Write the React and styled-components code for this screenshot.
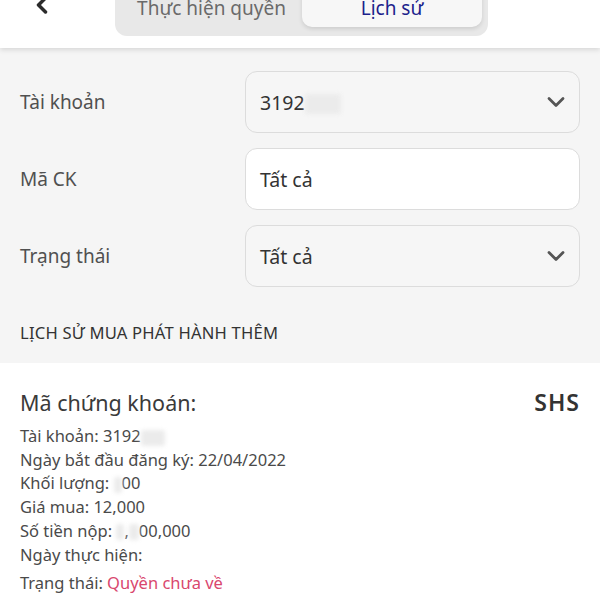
import styled, { createGlobalStyle } from "styled-components";
import { ChevronLeft, ChevronDown } from "lucide-react";

const GlobalStyle = createGlobalStyle`
  body {
    margin: 0;
    background: #ffffff;
    font-family: "Noto Sans", "Liberation Sans", sans-serif;
    color: #3a3a3a;
  }
`;

const Page = styled.div`
  width: 600px;
  height: 600px;
  overflow: hidden;
  display: flex;
  flex-direction: column;
  background: #f5f5f5;
`;

const Header = styled.header`
  height: 48px;
  flex-shrink: 0;
  display: flex;
  align-items: flex-end;
  background: #ffffff;
  box-shadow: 0 2px 5px rgba(0, 0, 0, 0.12);
  overflow: hidden;
  position: relative;
  z-index: 1;
`;

const BackButton = styled.button`
  width: 115px;
  height: 48px;
  align-self: flex-start;
  margin-top: -19px;
  padding: 0 0 0 28px;
  border: none;
  background: none;
  display: flex;
  align-items: center;
  color: #2b2b2b;
`;

const Segment = styled.div`
  width: 373px;
  height: 60px;
  margin-bottom: 12px;
  padding: 0 6px 9px;
  box-sizing: border-box;
  display: flex;
  align-items: flex-end;
  background: #e8e8e8;
  border-radius: 0 0 12px 12px;
`;

const Tab = styled.div`
  width: ${(p) => (p.$active ? "180px" : "181px")};
  height: 38px;
  display: flex;
  align-items: center;
  justify-content: center;
  font-size: 19px;
  color: ${(p) => (p.$active ? "#1c1f8c" : "#6a6a6a")};
  background: ${(p) => (p.$active ? "#f7f7f7" : "transparent")};
  border-radius: 0 0 10px 10px;
  box-shadow: ${(p) => (p.$active ? "0 2px 4px rgba(0,0,0,0.12)" : "none")};
`;

const Form = styled.section`
  padding: 23px 20px 0;
  display: flex;
  flex-direction: column;
  gap: 15px;
`;

const Row = styled.div`
  display: grid;
  grid-template-columns: 225px 335px;
  align-items: center;
`;

const Label = styled.span`
  font-size: 19px;
  color: #505050;
`;

const Field = styled.div`
  height: 62px;
  box-sizing: border-box;
  padding: 0 9px 0 14px;
  display: flex;
  align-items: center;
  justify-content: space-between;
  border: 1.5px solid #dcdcdc;
  border-radius: 12px;
  background: ${(p) => (p.$white ? "#ffffff" : "#f6f6f6")};
  font-size: 19.5px;
  color: #333333;
  svg {
    color: #555555;
  }
`;

const Blur = styled.span`
  display: inline-block;
  width: ${(p) => p.$w}px;
  height: ${(p) => p.$h || 20}px;
  vertical-align: middle;
  background: #ebebeb;
  filter: blur(2px);
  border-radius: 3px;
`;

const SectionTitle = styled.h2`
  margin: 0;
  padding: 34px 20px 19px;
  font-size: 16.6px;
  font-weight: 400;
  letter-spacing: 0.2px;
  color: #333333;
`;

const Card = styled.article`
  flex: 1;
  background: #ffffff;
  padding: 23px 20px 0;
`;

const CardHead = styled.div`
  display: flex;
  justify-content: space-between;
  align-items: center;
  margin-bottom: 6px;
`;

const CardTitle = styled.span`
  font-size: 21.5px;
  color: #3a3a3a;
`;

const Code = styled.span`
  font-size: 23px;
  font-weight: 600;
  letter-spacing: 1px;
  color: #333333;
`;

const Line = styled.div`
  font-size: 16.5px;
  line-height: 23.7px;
  color: #4a4a4a;
  margin-top: ${(p) => (p.$gap ? "5px" : "0")};
`;

const Status = styled.span`
  color: #d9476e;
`;

export default function App() {
  return (
    <Page>
      <GlobalStyle />
      <Header>
        <BackButton>
          <ChevronLeft size={28} strokeWidth={3} />
        </BackButton>
        <Segment>
          <Tab>Thực hiện quyền</Tab>
          <Tab $active>Lịch sử</Tab>
        </Segment>
      </Header>
      <Form>
        <Row>
          <Label>Tài khoản</Label>
          <Field>
            <span>
              3192<Blur $w={36} />
            </span>
            <ChevronDown size={28} strokeWidth={2.4} />
          </Field>
        </Row>
        <Row>
          <Label>Mã CK</Label>
          <Field $white>Tất cả</Field>
        </Row>
        <Row>
          <Label>Trạng thái</Label>
          <Field>
            <span>Tất cả</span>
            <ChevronDown size={28} strokeWidth={2.4} />
          </Field>
        </Row>
      </Form>
      <SectionTitle>LỊCH SỬ MUA PHÁT HÀNH THÊM</SectionTitle>
      <Card>
        <CardHead>
          <CardTitle>Mã chứng khoán:</CardTitle>
          <Code>SHS</Code>
        </CardHead>
        <Line>
          Tài khoản: 3192<Blur $w={24} $h={16} />
        </Line>
        <Line>Ngày bắt đầu đăng ký: 22/04/2022</Line>
        <Line>
          Khối lượng: <Blur $w={8} $h={16} />00
        </Line>
        <Line>Giá mua: 12,000</Line>
        <Line>
          Số tiền nộp: <Blur $w={8} $h={16} />,<Blur $w={10} $h={16} />00,000
        </Line>
        <Line>Ngày thực hiện:</Line>
        <Line $gap>
          Trạng thái: <Status>Quyền chưa về</Status>
        </Line>
      </Card>
    </Page>
  );
}
